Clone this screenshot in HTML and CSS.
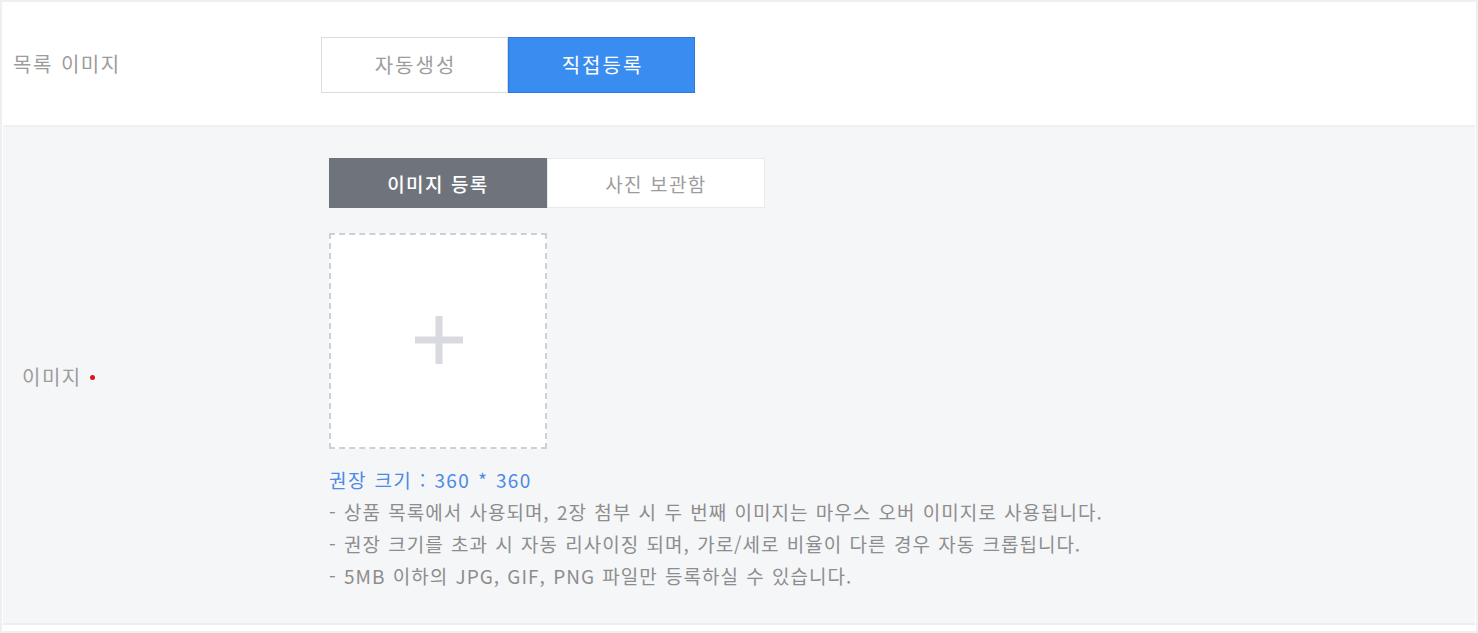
FILE: index.html
```html
<!DOCTYPE html>
<html lang="ko">
<head>
<meta charset="utf-8">
<link rel="stylesheet" href="styles.css">
</head>
<body>
<div class="frame">
  <div class="row row-top">
    <div class="label label-top">목록 이미지</div>
    <div class="seg">
      <button class="seg-btn">자동생성</button>
      <button class="seg-btn active">직접등록</button>
    </div>
  </div>
  <div class="row row-image">
    <div class="label label-image">이미지<span class="req"></span></div>
    <div class="content">
      <div class="tabs">
        <div class="tab tab-on">이미지 등록</div>
        <div class="tab">사진 보관함</div>
      </div>
      <div class="upload">
        <svg width="48" height="48" viewBox="0 0 48 48"><rect x="20.5" y="0" width="7" height="48" fill="#d9dadf"/><rect x="0" y="20.5" width="48" height="7" fill="#d9dadf"/></svg>
      </div>
      <div class="hint-blue">권장 크기 : 360 * 360</div>
      <div class="hint">- 상품 목록에서 사용되며, 2장 첨부 시 두 번째 이미지는 마우스 오버 이미지로 사용됩니다.</div>
      <div class="hint">- 권장 크기를 초과 시 자동 리사이징 되며, 가로/세로 비율이 다른 경우 자동 크롭됩니다.</div>
      <div class="hint">- 5MB 이하의 JPG, GIF, PNG 파일만 등록하실 수 있습니다.</div>
    </div>
  </div>
</div>
</body>
</html>
```
FILE: styles.css
```css
html, body {
  margin: 0;
  padding: 0;
  background: #ffffff;
}
body {
  font-family: "Noto Sans CJK KR", "Noto Sans", sans-serif;
  width: 1478px;
  height: 633px;
  overflow: hidden;
}
.frame {
  box-sizing: border-box;
  width: 1478px;
  height: 633px;
  border: 2px solid #efeff0;
  background: #ffffff;
  display: flex;
  flex-direction: column;
  padding: 0 1px 0 1px;
}
.row-top {
  height: 123px;
  display: flex;
  align-items: center;
  border-bottom: 2px solid #eff0f2;
}
.label {
  font-size: 20px;
  letter-spacing: 1.5px;
  word-spacing: 1px;
  color: #9c9c9c;
}
.label-top {
  width: 307px;
  padding-left: 10px;
  box-sizing: border-box;
  margin-top: -1px;
}
.seg {
  display: flex;
  margin-left: 11px;
  margin-top: 2px;
}
.seg-btn {
  width: 187px;
  height: 56px;
  box-sizing: border-box;
  font-family: inherit;
  font-size: 20px;
  letter-spacing: 2px;
  color: #9d9d9d;
  background: #ffffff;
  border: 1px solid #dcdcdc;
  padding: 0 0 0 2px;
}
.seg-btn.active {
  background: #3a8df0;
  border-color: #2f78d8;
  color: #ffffff;
}
.row-image {
  flex: 1;
  background: #f5f6f8;
  display: flex;
  align-items: stretch;
  border-bottom: 2px solid #eceef1;
  margin-bottom: 6px;
}
.label-image {
  width: 326px;
  padding-left: 19px;
  box-sizing: border-box;
  display: flex;
  align-items: center;
  margin-top: 2px;
}
.req {
  width: 5px;
  height: 5px;
  border-radius: 50%;
  background: #e0121b;
  margin-left: 8px;
  margin-top: 2px;
}
.content {
  padding-top: 31px;
  display: flex;
  flex-direction: column;
  align-items: flex-start;
}
.tabs {
  display: flex;
}
.tab {
  width: 218px;
  height: 50px;
  box-sizing: border-box;
  display: flex;
  align-items: center;
  justify-content: center;
  font-size: 19px;
  letter-spacing: 1.5px;
  color: #9d9d9d;
  background: #ffffff;
  border: 1px solid #e8e9ec;
}
.tab-on {
  background: #6f747c;
  border-color: #6f747c;
  color: #ffffff;
  font-weight: 500;
}
.upload {
  margin-top: 25px;
  width: 218px;
  height: 216px;
  box-sizing: border-box;
  border: 2px dashed #cfd0d3;
  background: #ffffff;
  display: flex;
  align-items: center;
  justify-content: center;
}
.upload svg {
  margin-top: -2px;
  margin-left: 2px;
}
.hint-blue {
  margin-top: 15px;
  font-size: 19px;
  letter-spacing: 1.4px;
  word-spacing: 1px;
  line-height: 32px;
  color: #4c8ae6;
}
.hint {
  font-size: 19px;
  letter-spacing: 1px;
  word-spacing: 1px;
  line-height: 32px;
  color: #8d8d8d;
}
```
